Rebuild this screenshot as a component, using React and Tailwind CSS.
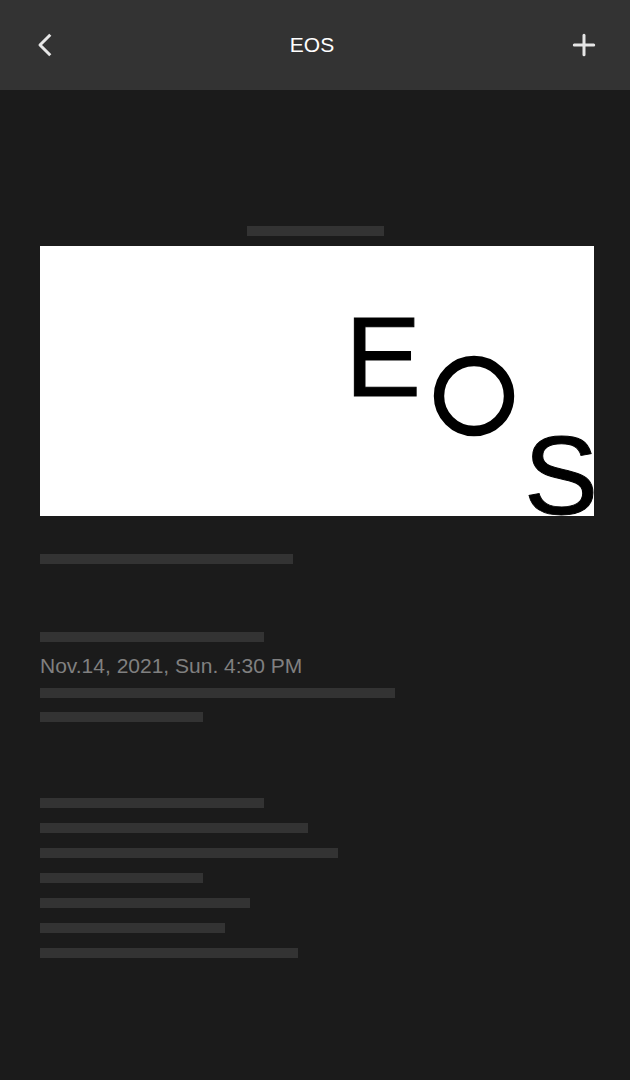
import React from 'react';

function BackIcon() {
  return (
    <svg viewBox="0 0 24 24" className="size-6" fill="none" stroke="currentColor" strokeWidth="3" aria-hidden="true">
      <path d="M22.3 1.8 12 12l10.3 10.2" strokeLinejoin="round" />
    </svg>
  );
}

function AddIcon() {
  return (
    <svg viewBox="0 0 24 24" className="size-6" fill="none" stroke="currentColor" strokeWidth="3" strokeLinecap="round" aria-hidden="true">
      <path d="M12 2.3v19.4M2.3 12h19.4" />
    </svg>
  );
}

function Bar({ className }) {
  return <div className={`h-2.5 max-w-full bg-[#333333] ${className}`} />;
}

function Logo() {
  return (
    <svg viewBox="0 0 240 200" className="w-60 overflow-visible" role="img" aria-label="EOS">
      <g fontFamily="'Liberation Sans', Arial, sans-serif" fill="#000" stroke="#000" strokeWidth="1">
        <text x="-9" y="80" fontSize="114">E</text>
        <text x="170" y="198" fontSize="111">S</text>
      </g>
      <circle cx="120" cy="80" r="35" fill="none" stroke="#000" strokeWidth="10.4" />
    </svg>
  );
}

export default function App() {
  return (
    <div className="min-h-screen bg-[#1b1b1b] font-['Liberation_Sans',Arial,sans-serif] text-[21px] leading-6">
      <header className="flex h-[90px] items-center justify-between bg-[#333333] pr-[34px] pl-7 text-[#e6e6e6]">
        <button type="button" aria-label="Back">
          <BackIcon />
        </button>
        <h1 className="text-white">EOS</h1>
        <button type="button" aria-label="Add">
          <AddIcon />
        </button>
      </header>
      <main className="flex flex-col pt-[136px] pr-9 pb-10 pl-10">
        <Bar className="mr-1 w-[137px] self-center" />
        <div className="mt-2.5 flex h-[270px] items-end justify-end bg-white">
          <Logo />
        </div>
        <Bar className="mt-[38px] w-[253px]" />
        <section className="mt-[68px] flex flex-col">
          <Bar className="w-56" />
          <p className="mt-3 text-[#808080]">Nov.14, 2021, Sun. 4:30 PM</p>
          <Bar className="mt-2.5 w-[355px]" />
          <Bar className="mt-3.5 w-[163px]" />
        </section>
        <section className="mt-[76px] flex flex-col gap-[15px]">
          <Bar className="w-56" />
          <Bar className="w-[268px]" />
          <Bar className="w-[298px]" />
          <Bar className="w-[163px]" />
          <Bar className="w-[210px]" />
          <Bar className="w-[185px]" />
          <Bar className="w-[258px]" />
        </section>
      </main>
    </div>
  );
}
